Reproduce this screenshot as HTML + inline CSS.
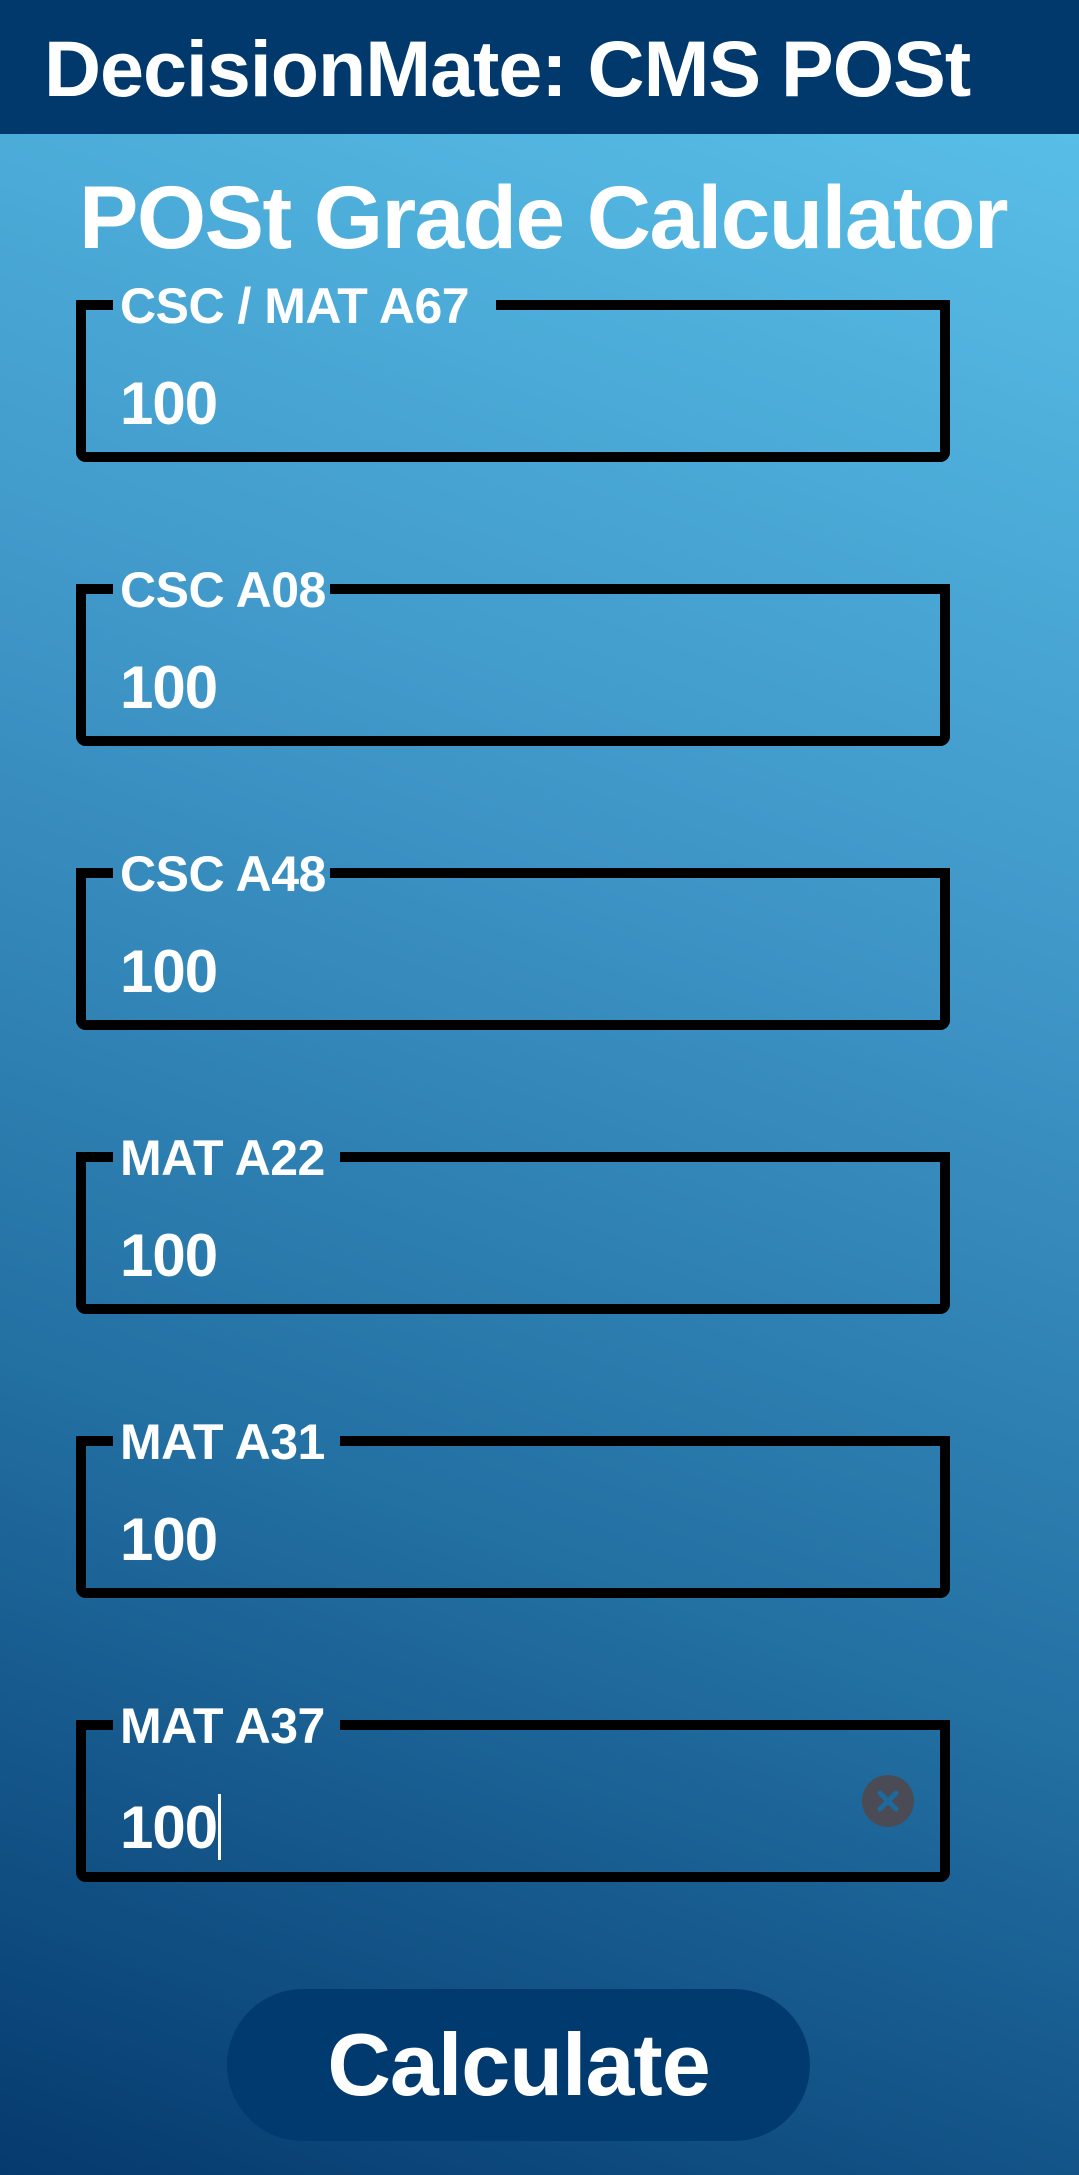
<!DOCTYPE html>
<html><head><meta charset="utf-8"><style>
*{margin:0;padding:0;box-sizing:border-box}
html,body{width:1079px;height:2175px;overflow:hidden}
body{font-family:"Liberation Sans",sans-serif;font-weight:bold;color:#fff;position:relative;
background:linear-gradient(200deg,#5cc4ec 0%,#3f97c8 38%,#2370a3 68%,#053a6e 100%)}
.hdr{position:absolute;left:0;top:0;width:1079px;height:134px;background:#01396d}
.hdr span{position:absolute;left:44px;top:23px;font-size:79px;letter-spacing:-1px;white-space:nowrap}
.title{position:absolute;left:79px;top:166px;font-size:89px;letter-spacing:-1.5px;white-space:nowrap}
.box{position:absolute;left:76px;width:874px;height:162px;border:10px solid #000;border-top:none;border-radius:0 0 10px 10px}
.tl,.tr{position:absolute;top:0;height:10px;background:#000}
.tl{left:-10px;width:37px;border-radius:10px 0 0 0}
.tr{right:-10px;border-radius:0 10px 0 0}
.lbl{position:absolute;left:34px;top:-19px;font-size:50px;line-height:50px;letter-spacing:-0.5px;white-space:nowrap}
.val{position:absolute;left:34px;top:74px;font-size:60px;line-height:60px;letter-spacing:-1px}
.clr{position:absolute;left:776px;top:55px;width:52px;height:52px;border-radius:50%;background:#4a4b55}
.btn{position:absolute;left:227px;top:1989px;width:583px;height:152px;border-radius:76px;background:#013a6e;text-align:center;font-size:88px;line-height:152px;letter-spacing:-1px}
</style></head><body>
<div class="hdr"><span>DecisionMate: CMS POSt</span></div>
<div class="title">POSt Grade Calculator</div>

<div class="box" style="top:300px"><div class="tl"></div><div class="tr" style="left:410px"></div><div class="lbl">CSC / MAT A67</div><div class="val">100</div></div>
<div class="box" style="top:584px"><div class="tl"></div><div class="tr" style="left:244px"></div><div class="lbl">CSC A08</div><div class="val">100</div></div>
<div class="box" style="top:868px"><div class="tl"></div><div class="tr" style="left:244px"></div><div class="lbl">CSC A48</div><div class="val">100</div></div>
<div class="box" style="top:1152px"><div class="tl"></div><div class="tr" style="left:254px"></div><div class="lbl">MAT A22</div><div class="val">100</div></div>
<div class="box" style="top:1436px"><div class="tl"></div><div class="tr" style="left:254px"></div><div class="lbl">MAT A31</div><div class="val">100</div></div>
<div class="box" style="top:1720px"><div class="tl"></div><div class="tr" style="left:254px"></div><div class="lbl">MAT A37</div><div class="val">100<span style="display:inline-block;width:3px;height:66px;background:#fff;vertical-align:-12px;margin-left:1px"></span></div>
<div class="clr"><svg width="52" height="52" viewBox="0 0 52 52"><path d="M18 18L34 34M34 18L18 34" stroke="#1f6a9c" stroke-width="5" stroke-linecap="round"/></svg></div></div>

<div class="btn">Calculate</div>
</body></html>
